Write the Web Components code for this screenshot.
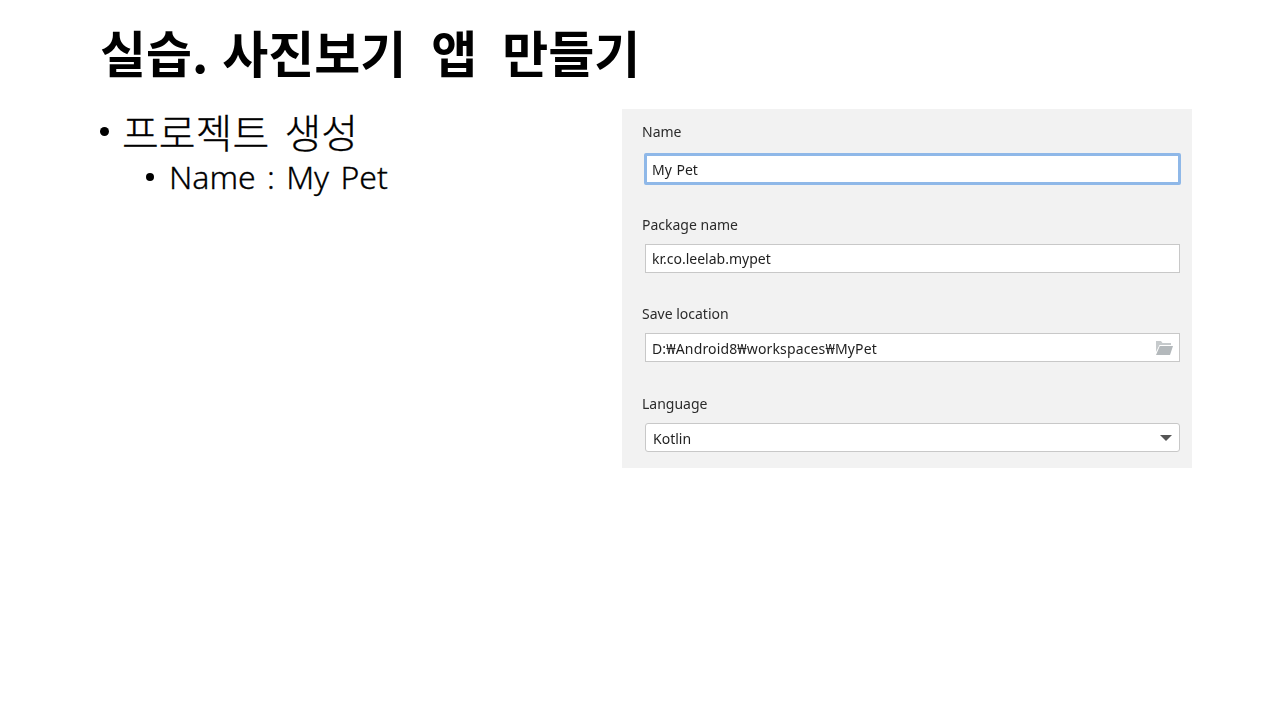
<!DOCTYPE html>
<html lang="ko"><head><meta charset="utf-8">
<style>html,body{margin:0;padding:0;background:#fff}</style>
</head><body>
<slide-page>
  <span slot="title"><span style="word-spacing:0">실습. </span>사진보기 앱 만들기</span>
  <bullet-item slot="left" level="1">프로젝트 생성</bullet-item>
  <bullet-item slot="left" level="2">Name : My Pet</bullet-item>
  <form-panel slot="right">
    <form-field label="Name" value="My Pet" kind="focus"></form-field>
    <form-field label="Package name" value="kr.co.leelab.mypet"></form-field>
    <form-field label="Save location" value="D:₩Android8₩workspaces₩MyPet" kind="folder"></form-field>
    <form-field label="Language" value="Kotlin" kind="select"></form-field>
  </form-panel>
</slide-page>
<script>
class SlidePage extends HTMLElement{constructor(){super();this.attachShadow({mode:'open'}).innerHTML=`<style>
:host{display:block;width:1280px;height:720px;box-sizing:border-box;padding:16px 88px 0 100px;overflow:hidden;background:#fff;color:#000;font-family:"Noto Sans CJK KR","Noto Sans",sans-serif}
h1{margin:0;font-size:50px;line-height:70px;font-weight:700;height:93px;white-space:nowrap;word-spacing:11px}
.cols{display:flex;justify-content:space-between;align-items:flex-start}
.left{display:flex;flex-direction:column}
</style><h1><slot name="title"></slot></h1><div class="cols"><div class="left"><slot name="left"></slot></div><slot name="right"></slot></div>`}}
class BulletItem extends HTMLElement{constructor(){super();this.attachShadow({mode:'open'}).innerHTML=`<style>
:host{display:flex;align-items:center;white-space:nowrap;font-weight:300;-webkit-text-stroke:.3px #000}
:host([level="1"]){font-size:40px;line-height:44px;gap:13px;height:44px;word-spacing:4px}
:host([level="2"]){font-size:32px;line-height:50px;gap:15px;margin-left:46px;height:48px;font-family:"Noto Sans","Noto Sans CJK KR",sans-serif;font-weight:300;word-spacing:3px}
i{display:block;border-radius:50%;background:#000;flex:none}
:host([level="1"]) i{width:9px;height:9px}
:host([level="2"]) i{width:8px;height:8px}
</style><i></i><span><slot></slot></span>`}}
class FormPanel extends HTMLElement{constructor(){super();this.attachShadow({mode:'open'}).innerHTML=`<style>
:host{display:flex;flex-direction:column;width:570px;height:359px;box-sizing:border-box;background:#f2f2f2;padding:12px 12px 0 20px;gap:29px;font-family:"Noto Sans","Noto Sans CJK KR",sans-serif;font-size:14px;color:#222;filter:blur(.4px)}
</style><slot></slot>`}}
class FormField extends HTMLElement{constructor(){super();
const kind=this.getAttribute('kind')||'';
const icon=kind==='folder'?`<svg width="18" height="15" viewBox="0 0 18 15"><path d="M1 1h5l1.500 2H16v2H4.500L1 12z" fill="#c6cacc"/><path d="M4.800 6H18l-3 9H1z" fill="#b4b9bc"/></svg>`:kind==='select'?`<svg width="12" height="6" viewBox="0 0 12 6"><path d="M0 0h12L6 6z" fill="#555"/></svg>`:'';
this.attachShadow({mode:'open'}).innerHTML=`<style>
:host{display:flex;flex-direction:column;gap:8px}
:host([kind="focus"]){gap:10px}
:host([kind="folder"]){margin-top:1px}
:host([kind="select"]){margin-top:2px}
label{display:block;line-height:22px;height:22px;color:#2b2b2b}
.box{display:flex;align-items:center;justify-content:space-between;box-sizing:border-box;height:29px;width:535px;margin-left:3px;background:#fff;border:1.500px solid #c8c8c8;padding:0 6px 0 6px;color:#1f1f1f;word-spacing:1px}
:host([kind="focus"]) .box{height:32px;width:537px;margin-left:2px;border:3px solid #8fb8e8;border-radius:2px;padding-left:5px}
:host([kind="folder"]) span{letter-spacing:.14px;padding-top:1px}
:host([kind="select"]) span{padding-top:2px}
:host([kind="select"]) .box{border-radius:3px;padding-left:7px;padding-right:7px}
</style><label>${this.getAttribute('label')}</label><div class="box"><span>${this.getAttribute('value')}</span>${icon}</div>`}}
customElements.define('slide-page',SlidePage);
customElements.define('bullet-item',BulletItem);
customElements.define('form-panel',FormPanel);
customElements.define('form-field',FormField);
</script>
</body></html>
